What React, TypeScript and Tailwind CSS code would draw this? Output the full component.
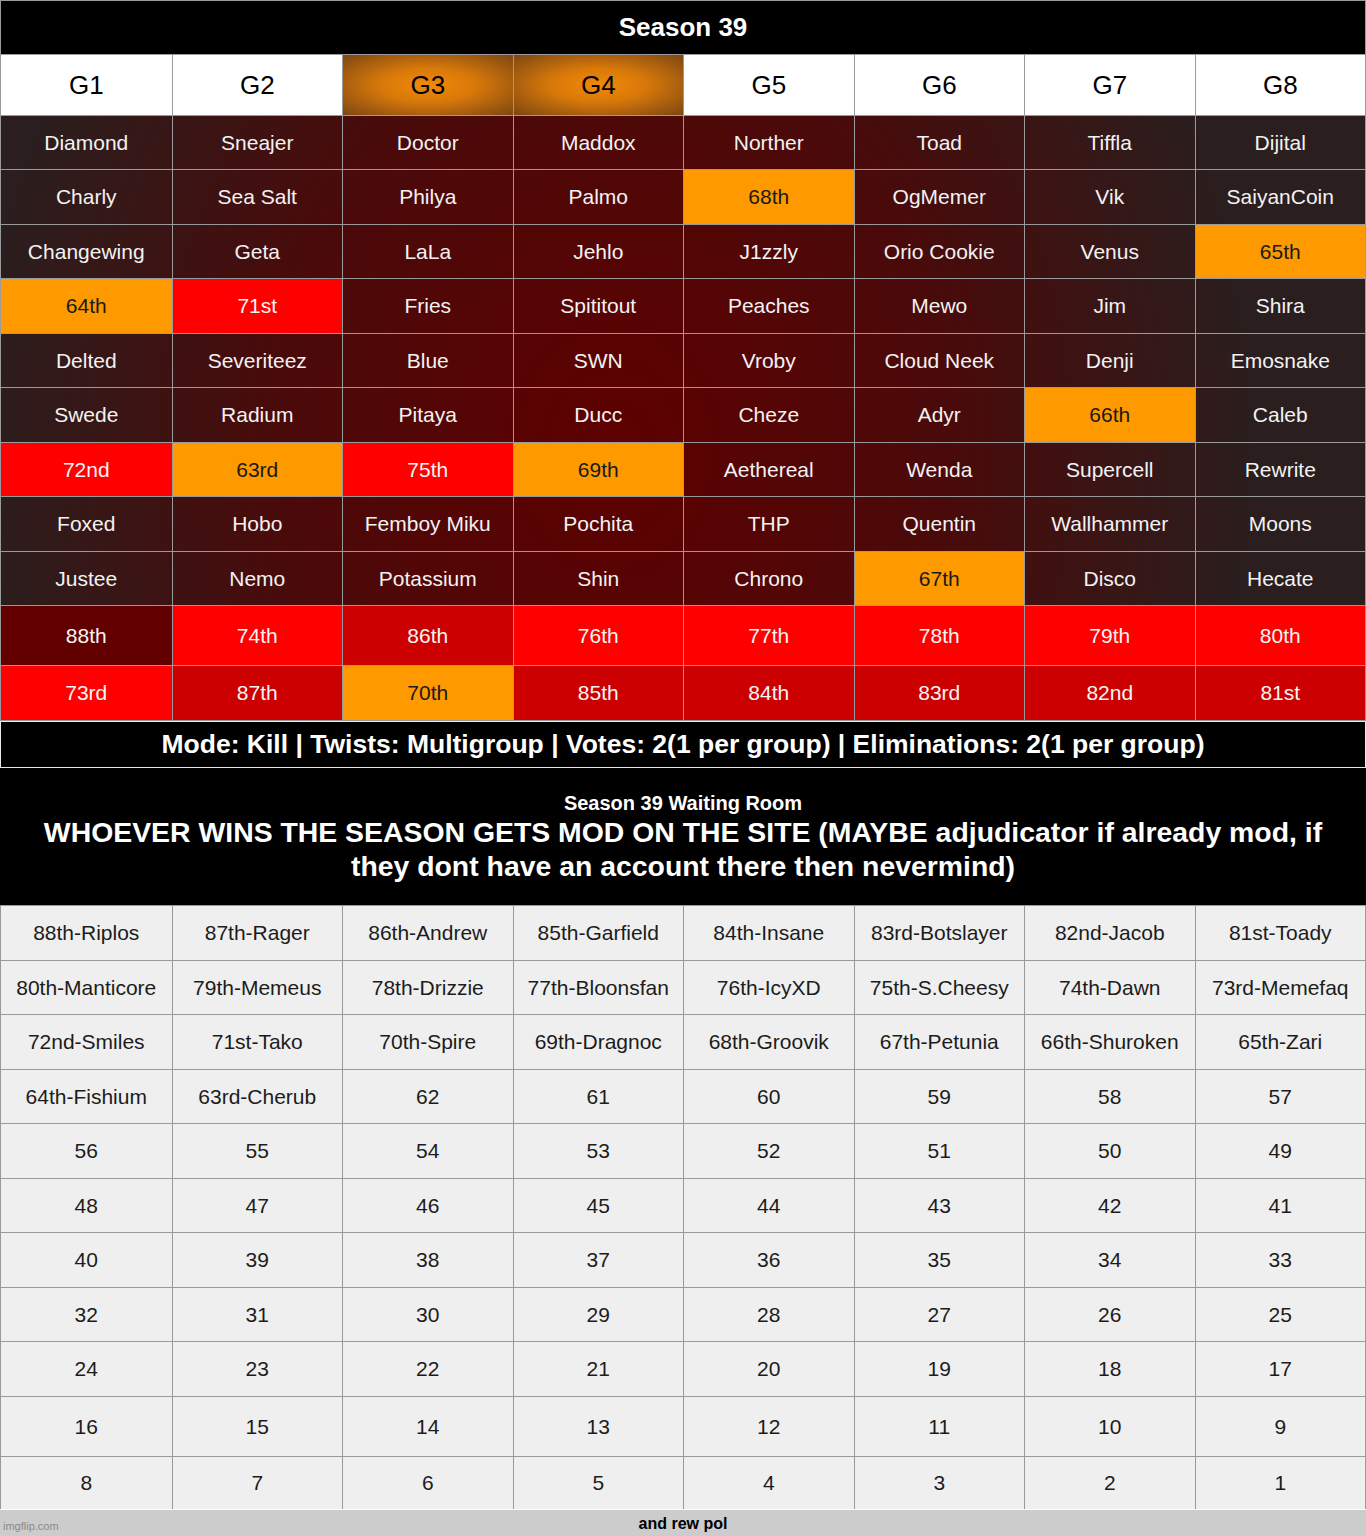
import React from "react";

type Cell = { t: string; c?: "O" | "R" | "C" | "D" };

const O = (t: string): Cell => ({ t, c: "O" });
const R = (t: string): Cell => ({ t, c: "R" });
const C = (t: string): Cell => ({ t, c: "C" });
const D = (t: string): Cell => ({ t, c: "D" });
const N = (t: string): Cell => ({ t });

const rows: Cell[][] = [
  ["Diamond", "Sneajer", "Doctor", "Maddox", "Norther", "Toad", "Tiffla", "Dijital"].map(N),
  [N("Charly"), N("Sea Salt"), N("Philya"), N("Palmo"), O("68th"), N("OgMemer"), N("Vik"), N("SaiyanCoin")],
  [N("Changewing"), N("Geta"), N("LaLa"), N("Jehlo"), N("J1zzly"), N("Orio Cookie"), N("Venus"), O("65th")],
  [O("64th"), R("71st"), N("Fries"), N("Spititout"), N("Peaches"), N("Mewo"), N("Jim"), N("Shira")],
  ["Delted", "Severiteez", "Blue", "SWN", "Vroby", "Cloud Neek", "Denji", "Emosnake"].map(N),
  [N("Swede"), N("Radium"), N("Pitaya"), N("Ducc"), N("Cheze"), N("Adyr"), O("66th"), N("Caleb")],
  [R("72nd"), O("63rd"), R("75th"), O("69th"), N("Aethereal"), N("Wenda"), N("Supercell"), N("Rewrite")],
  ["Foxed", "Hobo", "Femboy Miku", "Pochita", "THP", "Quentin", "Wallhammer", "Moons"].map(N),
  [N("Justee"), N("Nemo"), N("Potassium"), N("Shin"), N("Chrono"), O("67th"), N("Disco"), N("Hecate")],
  [D("88th"), R("74th"), C("86th"), R("76th"), R("77th"), R("78th"), R("79th"), R("80th")],
  [R("73rd"), C("87th"), O("70th"), C("85th"), C("84th"), C("83rd"), C("82nd"), C("81st")],
];

const rowH = ["h-[53px]", "h-[54px]", "h-[53px]", "h-[54px]", "h-[53px]", "h-[54px]", "h-[53px]", "h-[54px]", "h-[53px]", "h-[59px]", "h-[54px]"];

const cellBg = (c?: Cell["c"]) => {
  switch (c) {
    case "O":
      return "bg-[#ff9900] text-[#1a1a1a]";
    case "R":
      return "bg-[#ff0000] text-[#f4f4f4]";
    case "C":
      return "bg-[#cc0000] text-[#f4f4f4]";
    case "D":
      return "bg-[#620000] text-[#f4f4f4]";
    default:
      return "bg-transparent text-[#f2f2f2]";
  }
};

const waiting: string[][] = [
  ["88th-Riplos", "87th-Rager", "86th-Andrew", "85th-Garfield", "84th-Insane", "83rd-Botslayer", "82nd-Jacob", "81st-Toady"],
  ["80th-Manticore", "79th-Memeus", "78th-Drizzie", "77th-Bloonsfan", "76th-IcyXD", "75th-S.Cheesy", "74th-Dawn", "73rd-Memefaq"],
  ["72nd-Smiles", "71st-Tako", "70th-Spire", "69th-Dragnoc", "68th-Groovik", "67th-Petunia", "66th-Shuroken", "65th-Zari"],
  ["64th-Fishium", "63rd-Cherub", "62", "61", "60", "59", "58", "57"],
];
for (let start = 56; start >= 8; start -= 8) {
  const r: string[] = [];
  for (let i = 0; i < 8; i++) r.push(String(start - i));
  waiting.push(r);
}

const wRowH = ["h-[54px]", "h-[53px]", "h-[54px]", "h-[53px]", "h-[54px]", "h-[53px]", "h-[54px]", "h-[53px]", "h-[54px]", "h-[59px]", "h-[52px]"];

const headers = ["G1", "G2", "G3", "G4", "G5", "G6", "G7", "G8"];

export default function App() {
  return (
    <div className="w-[1366px] bg-white font-['Liberation_Sans',Arial,sans-serif]">
      {/* Top table */}
      <div className="border border-[#9a9a9a]">
        <div className="h-[53px] bg-black flex items-center justify-center text-white font-bold text-[26px]">
          Season 39
        </div>
        <div className="grid grid-cols-8 border-t border-[#9a9a9a]">
          {headers.map((h, i) => (
            <div
              key={h}
              className={`h-[60px] flex items-center justify-center text-[26px] text-black ${i > 0 ? "border-l border-[#9a9a9a]" : ""} ${
                i === 2 || i === 3 ? "bg-[radial-gradient(ellipse_at_center,#f28a08_0%,#d7780a_40%,#7c4612_100%)]" : "bg-white"
              }`}
            >
              {h}
            </div>
          ))}
        </div>
        <div className="bg-[radial-gradient(ellipse_55%_150%_at_45%_55%,#5e0000_0%,#4a0a0a_45%,#2b1e1e_85%,#2a1e1e_100%)]">
          {rows.map((row, ri) => (
            <div key={ri} className="grid grid-cols-8 border-t border-[#9a9a9a]">
              {row.map((cell, ci) => (
                <div
                  key={ci}
                  className={`${rowH[ri]} flex items-center justify-center text-[21px] ${cellBg(cell.c)} ${ci > 0 ? "border-l border-[#9a9a9a]" : ""}`}
                >
                  {cell.t}
                </div>
              ))}
            </div>
          ))}
        </div>
      </div>

      {/* Mode bar */}
      <div className="h-[47px] bg-black border border-[#e8e8e8] flex items-center justify-center text-white font-bold text-[26.5px]">
        Mode: Kill | Twists: Multigroup | Votes: 2(1 per group) | Eliminations: 2(1 per group)
      </div>

      {/* Waiting room header */}
      <div className="h-[137px] bg-black flex flex-col items-center justify-center text-white font-bold text-center">
        <div className="text-[20px] leading-[24px]">Season 39 Waiting Room</div>
        <div className="text-[28.4px] leading-[34px] px-[30px]">
          WHOEVER WINS THE SEASON GETS MOD ON THE SITE (MAYBE adjudicator if already mod, if they dont have an account there then nevermind)
        </div>
      </div>

      {/* Waiting table */}
      <div className="border-x border-t border-[#9a9a9a] bg-[#efefef]">
        {waiting.map((row, ri) => (
          <div key={ri} className={`grid grid-cols-8 ${ri > 0 ? "border-t border-[#9a9a9a]" : ""}`}>
            {row.map((t, ci) => (
              <div
                key={ci}
                className={`${wRowH[ri]} flex items-center justify-center text-[21px] text-[#1c1c1c] ${ci > 0 ? "border-l border-[#9a9a9a]" : ""}`}
              >
                {t}
              </div>
            ))}
          </div>
        ))}
      </div>

      {/* Footer */}
      <div className="relative h-[28px] bg-[#cccccc] border-t border-white flex items-center justify-center">
        <span className="font-bold text-[16px] text-black">and rew pol</span>
        <span className="absolute left-[3px] bottom-[3px] text-[11px] text-[#8a8a8a]">imgflip.com</span>
      </div>
    </div>
  );
}
